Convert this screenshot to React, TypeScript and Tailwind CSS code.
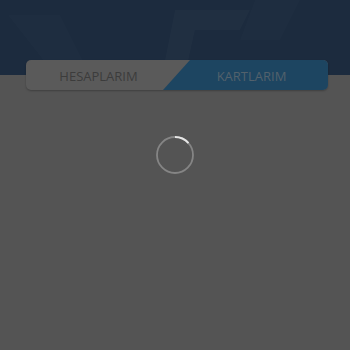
import React from "react";

function Spinner() {
  return (
    <svg width="40" height="40" viewBox="0 0 40 40" className="block">
      <circle cx="20" cy="20" r="18" fill="none" stroke="#858585" strokeWidth="1.8" />
      <path
        d="M20 2 A18 18 0 0 1 33.5 8.1"
        fill="none"
        stroke="#e6e6e6"
        strokeWidth="2"
      />
    </svg>
  );
}

function Watermark() {
  return (
    <svg
      width="350"
      height="75"
      viewBox="0 0 350 75"
      className="absolute left-0 top-0"
    >
      <path d="M8 15 L60 15 L90 75 L55 75 Z" fill="#ffffff" opacity="0.012" />
      <path d="M175 10 L250 10 L240 30 L195 30 L185 75 L162 75 Z" fill="#ffffff" opacity="0.018" />
      <path d="M255 0 L300 0 L280 40 L240 40 Z" fill="#ffffff" opacity="0.012" />
    </svg>
  );
}

function Tabs() {
  return (
    <div className="relative ml-[26px] flex h-[30px] w-[302px] overflow-hidden rounded-[5px] bg-[#5a5a5a] shadow-[0_1px_2px_rgba(0,0,0,0.25)]">
      <div
        className="absolute inset-y-0 right-0 w-[165px] bg-[#1d4561]"
        style={{ clipPath: "polygon(27px 0, 100% 0, 100% 100%, 0 100%)" }}
      />
      <div className="relative flex w-[145px] items-center justify-center pt-[3px] text-[13px] text-[#3c3c3c]">
        HESAPLARIM
      </div>
      <div className="relative flex flex-1 items-center justify-center pl-[4px] pt-[3px] text-[13px] text-[#52616c]">
        KARTLARIM
      </div>
    </div>
  );
}

export default function App() {
  return (
    <div
      className="relative h-[350px] w-[350px] overflow-hidden bg-[#545454]"
      style={{ fontFamily: '"Open Sans", "Liberation Sans", sans-serif' }}
    >
      <div className="relative h-[75px] bg-[#1c2b3e]">
        <Watermark />
      </div>
      <div className="relative -mt-[15px]">
        <Tabs />
      </div>
      <div className="mt-[45px] flex justify-center">
        <Spinner />
      </div>
    </div>
  );
}
